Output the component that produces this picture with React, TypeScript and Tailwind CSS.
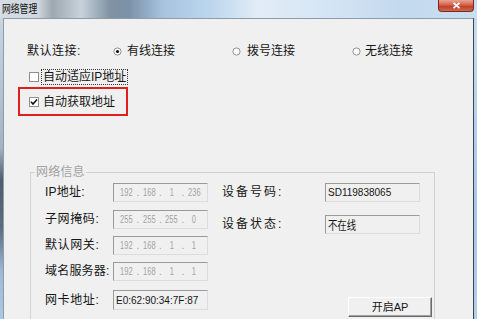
import React from "react";

const Radio = ({ checked }: { checked?: boolean }) => (
  <svg width="9" height="9" viewBox="0 0 9 9" className="shrink-0">
    <circle cx="4.5" cy="4.5" r="3.6" fill="#ffffff" stroke="#8f8f8f" strokeWidth="1" />
    {checked && <circle cx="4.5" cy="4.5" r="1.6" fill="#111111" />}
  </svg>
);

const Check = ({ checked }: { checked?: boolean }) => (
  <div className="w-[10px] h-[10px] shrink-0 bg-white border border-[#8e8f8f] flex items-center justify-center">
    {checked && (
      <svg width="8" height="8" viewBox="0 0 8 8">
        <path d="M1 3.8 L3 6 L7 1.5" fill="none" stroke="#111111" strokeWidth="1.6" />
      </svg>
    )}
  </div>
);

const Field = ({ children, className = "" }: { children?: React.ReactNode; className?: string }) => (
  <div
    className={
      "w-[95px] h-[19px] shrink-0 bg-[#f0f0f0] border-t border-l border-t-[#9a9a9a] border-l-[#9a9a9a] border-r border-b border-r-[#dcdcdc] border-b-[#dcdcdc] flex items-center " +
      className
    }
  >
    {children}
  </div>
);

const IpField = ({ parts }: { parts: string[] }) => (
  <Field className="px-[3px] text-[10px] text-[#a3a3a3] font-['Liberation_Sans',sans-serif]">
    {parts.map((p, i) => (
      <React.Fragment key={i}>
        {i > 0 && <span className="w-[3px] text-center">.</span>}
        <span className="flex-1 flex justify-center">
          <span className="inline-block scale-x-[0.75]">{p}</span>
        </span>
      </React.Fragment>
    ))}
  </Field>
);

const Label = ({ children, w, track = "tracking-[0.6px]" }: { children: React.ReactNode; w: string; track?: string }) => (
  <span className={"shrink-0 text-[12px] leading-[19px] text-[#161616] whitespace-nowrap " + w + " " + track}>{children}</span>
);

export default function App() {
  return (
    <div className="w-[477px] h-[319px] overflow-hidden flex flex-col bg-[#c4d9ee] font-['Liberation_Sans','Noto_Sans_CJK_SC',sans-serif]">
      {/* title bar */}
      <div className="h-[18px] shrink-0 flex items-start bg-[linear-gradient(90deg,#d6dde4_0%,#cfd6dd_8%,#9ea8b0_11%,#c8d2db_17%,#8193a4_23%,#7b91a7_27%,#a7c3de_34%,#bcd6ee_44%,#e1ecf6_54%,#d8e7f5_66%,#c3d9ee_84%,#cadef0_100%)]">
        <span className="ml-[2px] mt-[2px] text-[11px] leading-[12px] text-[#111] font-['Noto_Sans_CJK_SC',sans-serif] inline-block origin-left scale-x-[0.8]">网络管理</span>
        <div className="ml-auto mr-[3px] w-[36px] h-[12px] rounded-b-[4px] border border-t-0 border-[#7a2a20] bg-[linear-gradient(180deg,#e9a293_0%,#d4624c_45%,#c0412b_60%,#cf6a50_100%)] flex items-center justify-center">
          <svg width="9" height="7" viewBox="0 0 9 7">
            <path d="M1.5 0.8 L7.5 6.2 M7.5 0.8 L1.5 6.2" stroke="#ffffff" strokeWidth="1.8" />
          </svg>
        </div>
      </div>

      <div className="flex flex-1">
        <div className="w-[3px] shrink-0 bg-[linear-gradient(180deg,#c8d6e4_0%,#a6b4c2_40%,#4f5e6e_50%,#5c6d7e_65%,#9db9d6_78%,#b4cfe9_100%)]" />
        {/* client */}
        <div className="flex-1 bg-[#f0f0f0] border-t border-l border-[#8d9cab] flex flex-col">
          {/* row 1 */}
          <div className="mt-[24px] h-[16px] flex items-center text-[12px] text-[#161616] leading-[16px]">
            <span className="ml-[23px] w-[86px] tracking-[0.5px] shrink-0">默认连接:</span>
            <div className="w-[119px] flex items-center shrink-0">
              <Radio checked />
              <span className="ml-[5px]">有线连接</span>
            </div>
            <div className="w-[120px] flex items-center shrink-0">
              <Radio />
              <span className="ml-[6px]">拨号连接</span>
            </div>
            <div className="flex items-center shrink-0">
              <Radio />
              <span className="ml-[4px]">无线连接</span>
            </div>
          </div>

          {/* row 2 */}
          <div className="mt-[10px] h-[16px] flex items-center ml-[25px] text-[12px] text-[#161616]">
            <Check />
            <span className="ml-[3px] px-[1px] leading-[14px] outline outline-1 outline-dotted outline-[#333]">自动适应IP地址</span>
          </div>

          {/* row 3 red box */}
          <div className="mt-[2px] ml-[14px] w-[110px] h-[29px] border-2 border-[#e0201c] flex items-center pl-[9px] text-[12px] text-[#161616]">
            <Check checked />
            <span className="ml-[4px] leading-[16px]">自动获取地址</span>
          </div>

          {/* group box */}
          <div className="relative mt-[56px] ml-[26px] w-[405px] h-[170px] shrink-0 border border-[#cfd3d6] flex pl-[14px] pt-[10px]">
            <span className="absolute left-[4px] top-[-9px] px-[1px] bg-[#f0f0f0] text-[12px] leading-[16px] text-[#a3a3a3] tracking-[0.2px]">网络信息</span>

            {/* left column */}
            <div className="flex flex-col">
              <div className="flex items-center">
                <Label w="w-[68px]" track="tracking-[0.2px]">IP地址:</Label>
                <IpField parts={["192", "168", "1", "236"]} />
              </div>
              <div className="flex items-center mt-[8px]">
                <Label w="w-[68px]">子网掩码:</Label>
                <IpField parts={["255", "255", "255", "0"]} />
              </div>
              <div className="flex items-center mt-[7px]">
                <Label w="w-[68px]">默认网关:</Label>
                <IpField parts={["192", "168", "1", "1"]} />
              </div>
              <div className="flex items-center mt-[7px]">
                <Label w="w-[68px]" track="tracking-[0.2px]">域名服务器:</Label>
                <IpField parts={["192", "168", "1", "1"]} />
              </div>
              <div className="flex items-center mt-[9px]">
                <Label w="w-[68px]">网卡地址:</Label>
                <Field className="h-[20px] pl-[2px] text-[10px] text-[#161616] font-['Liberation_Sans',sans-serif]">E0:62:90:34:7F:87</Field>
              </div>
            </div>

            {/* right column */}
            <div className="flex flex-col ml-[14px]">
              <div className="flex items-center">
                <Label w="w-[103px]" track="tracking-[2px]">设备号码:</Label>
                <Field className="pl-[2px] text-[10px] text-[#161616] font-['Liberation_Sans',sans-serif]">SD119838065</Field>
              </div>
              <div className="flex items-center mt-[13px]">
                <Label w="w-[103px]" track="tracking-[2px]">设备状态:</Label>
                <Field className="pl-[2px] text-[12px] text-[#161616] font-['Noto_Sans_CJK_SC',sans-serif]">
                  <span className="inline-block origin-left scale-x-[0.78] leading-[14px]">不在线</span>
                </Field>
              </div>
              <button className="mt-[63px] ml-[126px] w-[84px] h-[20px] bg-[#f0f0f0] border-t border-l border-t-[#ffffff] border-l-[#ffffff] border-r border-b border-r-[#6a6a6a] border-b-[#6a6a6a] shadow-[inset_-1px_-1px_0_#a0a0a0] text-[11px] leading-[18px] text-[#161616] flex items-center justify-center">
                开启AP
              </button>
            </div>
          </div>
        </div>
        <div className="w-[4px] shrink-0 border-l border-[#33475c] bg-[linear-gradient(180deg,#c7dbef_0%,#a9c6e3_60%,#b8d1ea_100%)]" />
      </div>
    </div>
  );
}
